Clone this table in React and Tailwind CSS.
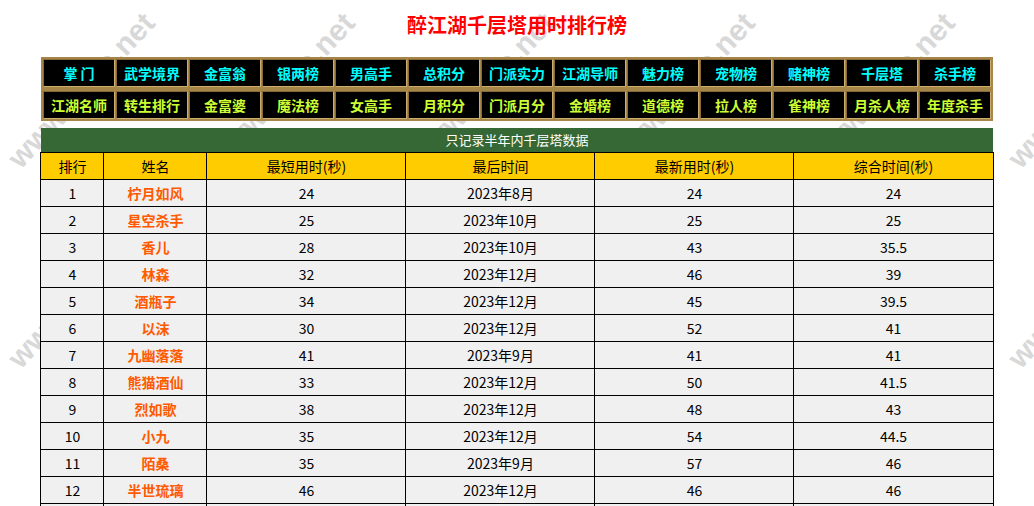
import React from 'react';

const navTop = ['掌 门', '武学境界', '金富翁', '银两榜', '男高手', '总积分', '门派实力', '江湖导师', '魅力榜', '宠物榜', '赌神榜', '千层塔', '杀手榜'];
const navBottom = ['江湖名师', '转生排行', '金富婆', '魔法榜', '女高手', '月积分', '门派月分', '金婚榜', '道德榜', '拉人榜', '雀神榜', '月杀人榜', '年度杀手'];

const rows = [
  [1, '柠月如风', 24, '2023年8月', 24, 24],
  [2, '星空杀手', 25, '2023年10月', 25, 25],
  [3, '香儿', 28, '2023年10月', 43, 35.5],
  [4, '林森', 32, '2023年12月', 46, 39],
  [5, '酒瓶子', 34, '2023年12月', 45, 39.5],
  [6, '以沫', 30, '2023年12月', 52, 41],
  [7, '九幽落落', 41, '2023年9月', 41, 41],
  [8, '熊猫酒仙', 33, '2023年12月', 50, 41.5],
  [9, '烈如歌', 38, '2023年12月', 48, 43],
  [10, '小九', 35, '2023年12月', 54, 44.5],
  [11, '陌桑', 35, '2023年9月', 57, 46],
  [12, '半世琉璃', 46, '2023年12月', 46, 46],
];

const headers = ['排行', '姓名', '最短用时(秒)', '最后时间', '最新用时(秒)', '综合时间(秒)'];

// background watermark, tiled every 200px
const Watermark = () => {
  const tiles = [];
  for (let ty = 0; ty < 3; ty++) {
    for (let tx = -1; tx < 6; tx++) {
      tiles.push({ x: tx * 200 + 81, y: ty * 200 + 90 });
    }
  }
  return (
    <div className="absolute inset-0 overflow-hidden pointer-events-none select-none">
      {tiles.map((t, i) => (
        <span
          key={i}
          className="absolute whitespace-nowrap text-[30px] font-bold text-[#d8d8d8] font-['Liberation_Sans',Arial,sans-serif]"
          style={{ left: t.x, top: t.y, transform: 'translate(-50%, -50%) rotate(-47deg)' }}
        >
          www.zuijh.net
        </span>
      ))}
    </div>
  );
};

const NavCell = ({ label, color }) => (
  <div
    className={`h-[28px] bg-black flex items-center justify-center text-[14px] font-bold whitespace-pre border border-t-[#86683a] border-l-[#86683a] border-b-[#cdae6e] border-r-[#cdae6e] ${color}`}
  >
    {label}
  </div>
);

const cell = 'p-0 border border-black text-center leading-none';

export default function App() {
  return (
    <div className="relative min-h-screen bg-white overflow-hidden font-['Noto_Sans_CJK_SC','Noto_Sans',sans-serif]">
      <Watermark />

      <div className="relative">
        <h1 className="pt-[11px] text-center text-[20px] leading-[28px] font-bold text-[#ff0000]">
          醉江湖千层塔用时排行榜
        </h1>

        {/* nav buttons */}
        <div className="mt-[18px] mx-auto w-[952px] bg-[#a58646] border border-[#a58646] p-[1px] grid grid-cols-13 gap-x-[1px] gap-y-[4px]">
          {navTop.map((n) => (
            <NavCell key={n} label={n} color="text-[#00ffff]" />
          ))}
          {navBottom.map((n) => (
            <NavCell key={n} label={n} color="text-[#ccff33]" />
          ))}
        </div>

        {/* ranking table */}
        <table className="mt-[7px] mx-auto w-[952px] border-collapse table-fixed text-[14px] text-black">
          <colgroup>
            <col className="w-[63px]" />
            <col className="w-[103px]" />
            <col className="w-[199px]" />
            <col className="w-[189px]" />
            <col className="w-[199px]" />
            <col className="w-[199px]" />
          </colgroup>
          <tbody>
            <tr>
              <td colSpan={6} className="h-[24px] p-0 bg-[#356834] text-white text-[13px] text-center leading-none">
                只记录半年内千层塔数据
              </td>
            </tr>
            <tr className="bg-[#ffcc00]">
              {headers.map((h) => (
                <td key={h} className={`h-[27px] ${cell}`}>
                  {h}
                </td>
              ))}
            </tr>
            {rows.map((r) => (
              <tr key={r[0]} className="bg-[#f0f0f0]">
                <td className={`h-[27px] ${cell}`}>{r[0]}</td>
                <td className={`${cell} font-bold text-[#ff5a00]`}>{r[1]}</td>
                <td className={cell}>{r[2]}</td>
                <td className={cell}>{r[3]}</td>
                <td className={cell}>{r[4]}</td>
                <td className={cell}>{r[5]}</td>
              </tr>
            ))}
            <tr className="bg-[#f0f0f0]">
              <td className={`h-[27px] ${cell}`}></td>
              <td className={cell}></td>
              <td className={cell}></td>
              <td className={cell}></td>
              <td className={cell}></td>
              <td className={cell}></td>
            </tr>
          </tbody>
        </table>
      </div>
    </div>
  );
}
